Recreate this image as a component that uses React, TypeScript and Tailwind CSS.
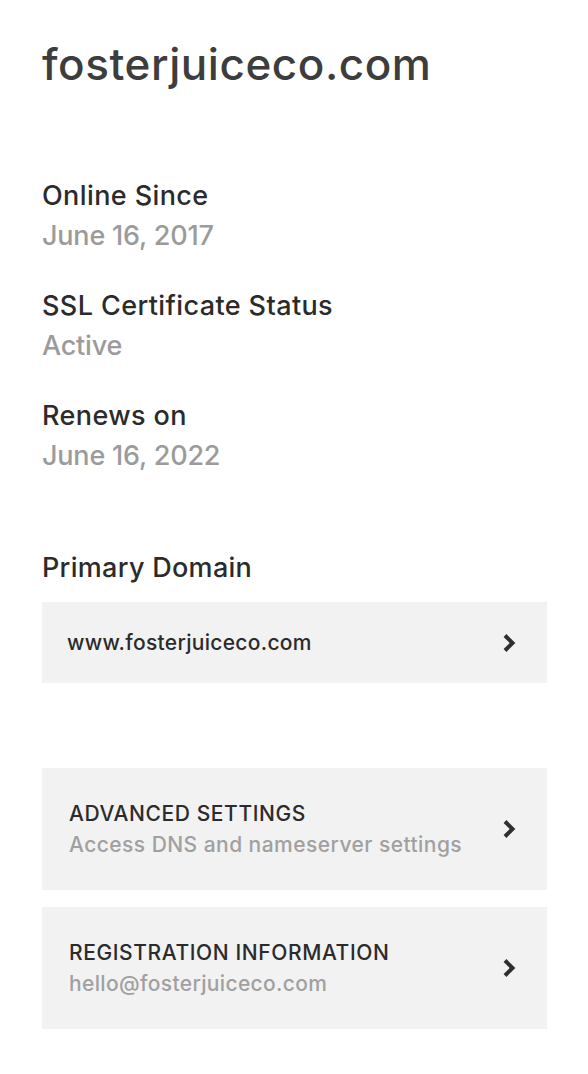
import React from "react";

function Chevron() {
    return (
        <svg width="14" height="20" viewBox="0 0 14 20" className="shrink-0">
            <polyline
                points="3,2.5 10.5,10 3,17.5"
                fill="none"
                stroke="#2f2f2f"
                strokeWidth="4"
                strokeLinejoin="miter"
                strokeLinecap="butt"
            />
        </svg>
    );
}

const details = [
    { label: "Online Since", value: "June 16, 2017" },
    { label: "SSL Certificate Status", value: "Active" },
    { label: "Renews on", value: "June 16, 2022" },
];

export default function App() {
    return (
        <div
            className="min-h-[1074px] w-full bg-white pl-[42px] pr-[41px] pt-[42px] antialiased"
            style={{ fontFamily: "Inter, 'Liberation Sans', sans-serif" }}
        >
            {/* Site title */}
            <h1 className="text-[44px] leading-[44px] font-medium tracking-[0.55px] text-[#3d3d3d]">
                fosterjuiceco.com
            </h1>

            {/* Details */}
            <div className="mt-[90px] flex flex-col gap-[30px]">
                {details.map((d) => (
                    <div key={d.label} className="flex flex-col">
                        <span className="text-[27px] leading-[40px] font-medium tracking-[0.4px] text-[#2b2b2b]">
                            {d.label}
                        </span>
                        <span className="text-[27px] leading-[40px] font-medium tracking-[-0.2px] text-[#9b9b9b]">
                            {d.value}
                        </span>
                    </div>
                ))}
            </div>

            {/* Primary domain */}
            <h2 className="mt-[72px] text-[27px] leading-[40px] font-medium tracking-[0.3px] text-[#2b2b2b]">
                Primary Domain
            </h2>
            <button className="mt-[14px] flex h-[81px] w-full items-center justify-between bg-[#f2f2f2] pl-[25px] pr-[31px] text-left">
                <span className="text-[21px] font-medium tracking-[0.3px] text-[#2b2b2b]">
                    www.fosterjuiceco.com
                </span>
                <Chevron />
            </button>

            {/* Settings links */}
            <div className="mt-[85px] flex flex-col gap-[17px]">
                {[
                    { title: "ADVANCED SETTINGS", sub: "Access DNS and nameserver settings", subTrack: "tracking-[0.45px]" },
                    { title: "REGISTRATION INFORMATION", sub: "hello@fosterjuiceco.com", subTrack: "tracking-[0.35px]" },
                ].map((item) => (
                    <button
                        key={item.title}
                        className="flex h-[122px] w-full items-center justify-between bg-[#f2f2f2] pl-[27px] pr-[31px] text-left"
                    >
                        <div className="flex flex-col">
                            <span className="text-[21px] leading-[31px] font-medium tracking-[0.6px] text-[#2b2b2b]">
                                {item.title}
                            </span>
                            <span className={`text-[21px] leading-[31px] font-medium text-[#a0a0a0] ${item.subTrack}`}>
                                {item.sub}
                            </span>
                        </div>
                        <Chevron />
                    </button>
                ))}
            </div>
        </div>
    );
}
